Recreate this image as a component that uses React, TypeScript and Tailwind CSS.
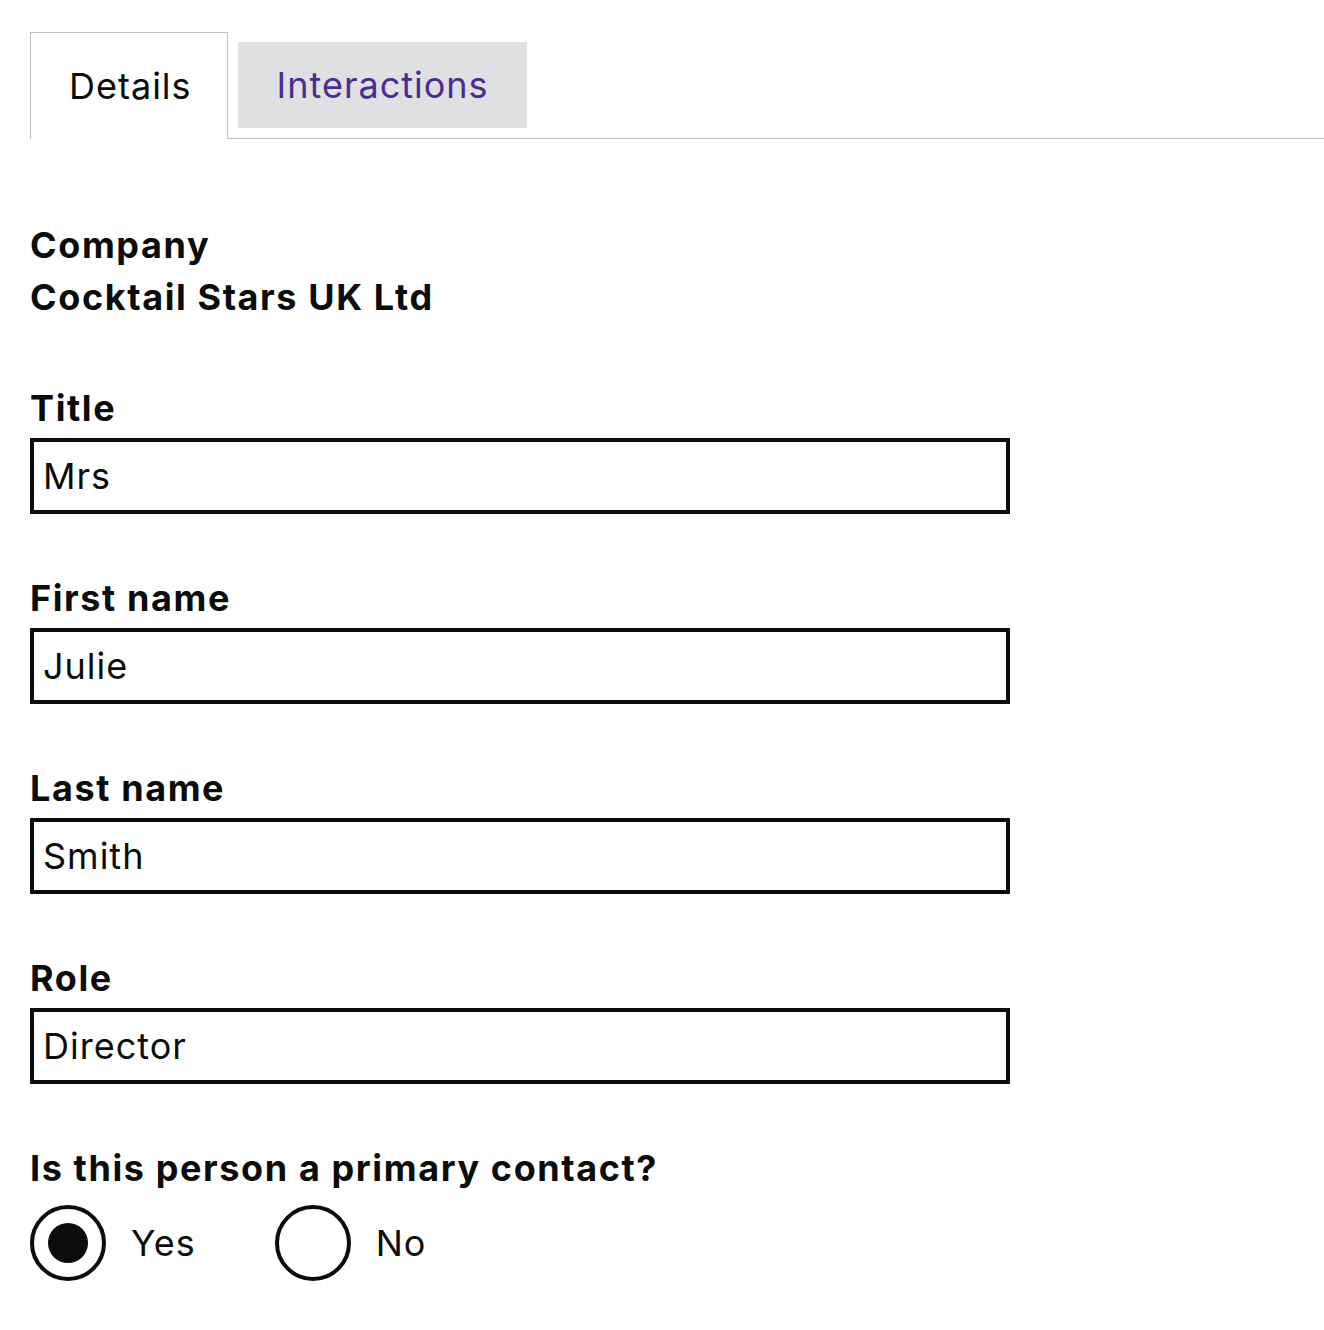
import { useState } from "react";

const FIELDS = [
  { id: "title", label: "Title", value: "Mrs" },
  { id: "first-name", label: "First name", value: "Julie" },
  { id: "last-name", label: "Last name", value: "Smith" },
  { id: "role", label: "Role", value: "Director" },
];

function Tabs() {
  return (
    <ul className="ml-[30px] flex items-start border-b border-[#bfc1c3] pt-[32px]">
      <li className="relative -mb-px flex h-[107px] items-center border-x border-t border-[#bfc1c3] bg-white pl-[38px] pr-[35px]">
        <span className="text-[36px] leading-none tracking-[1px] text-[#0b0c0c]">Details</span>
      </li>
      <li className="ml-[10px] mt-[10px] flex h-[86px] items-center bg-[#dee0e2] pl-[39px] pr-[38px]">
        <a href="#interactions" className="text-[36px] leading-none tracking-[1px] text-[#4c2c92]">
          Interactions
        </a>
      </li>
    </ul>
  );
}

function Field({ id, label, value }: { id: string; label: string; value: string }) {
  const [text, setText] = useState(value);
  return (
    <div className="mb-[59px]">
      <label htmlFor={id} className="mb-[5px] block text-[36px] font-bold leading-[50px] tracking-[1.6px]">
        {label}
      </label>
      <input
        id={id}
        value={text}
        onChange={(e) => setText(e.target.value)}
        className="block h-[76px] w-[980px] border-4 border-[#0b0c0c] px-[9px] text-[36px] tracking-[1px] text-[#0b0c0c] outline-none"
      />
    </div>
  );
}

function Radio({ label, checked, onSelect }: { label: string; checked: boolean; onSelect: () => void }) {
  return (
    <label className="flex cursor-pointer items-center" onClick={onSelect}>
      <span className="flex h-[76px] w-[76px] items-center justify-center rounded-full border-4 border-[#0b0c0c]">
        {checked && <span className="h-[40px] w-[40px] rounded-full bg-[#0b0c0c]" />}
      </span>
      <span className="ml-[25px] text-[36px] tracking-[1px] text-[#0b0c0c]">{label}</span>
    </label>
  );
}

export default function App() {
  const [primary, setPrimary] = useState("yes");

  return (
    <div className="min-h-[1330px] bg-white text-[#0b0c0c]" style={{ fontFamily: "Inter, 'Noto Sans', sans-serif" }}>
      <Tabs />

      <div className="px-[30px] pt-[80px]">
        <div className="mb-[60px] text-[36px] font-bold leading-[52px] tracking-[1.6px]">
          <p>Company</p>
          <p>Cocktail Stars UK Ltd</p>
        </div>

        {FIELDS.map((f) => (
          <Field key={f.id} {...f} />
        ))}

        <fieldset>
          <legend className="mb-[12px] text-[36px] font-bold leading-[50px] tracking-[1.6px]">
            Is this person a primary contact?
          </legend>
          <div className="flex gap-[79px]">
            <Radio label="Yes" checked={primary === "yes"} onSelect={() => setPrimary("yes")} />
            <Radio label="No" checked={primary === "no"} onSelect={() => setPrimary("no")} />
          </div>
        </fieldset>
      </div>
    </div>
  );
}
